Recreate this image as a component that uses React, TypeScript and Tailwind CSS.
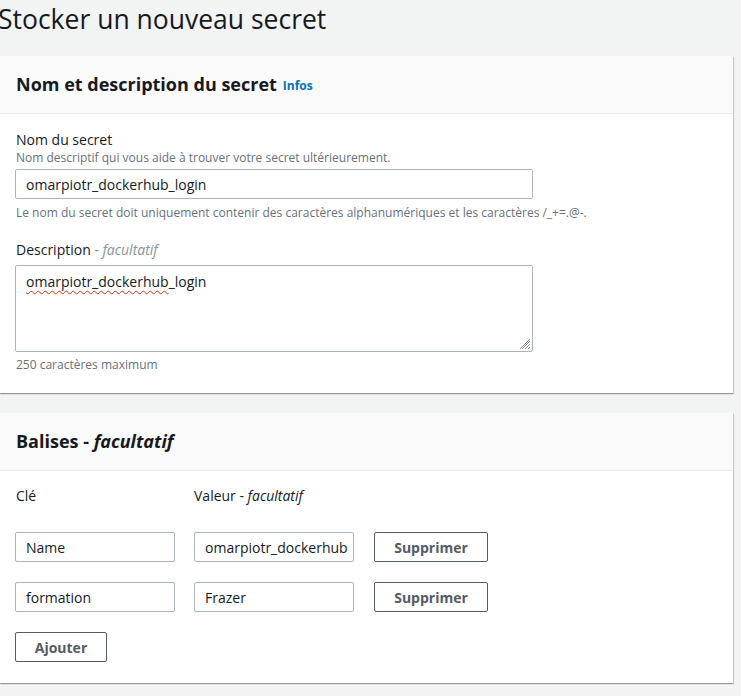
import React from "react";

const font = { fontFamily: '"Open Sans", "Noto Sans", Arial, sans-serif' };

function Input({ value, w }: { value: string; w: string }) {
  return (
    <div className={`${w} h-[30px] border border-[#aab7b8] rounded-[2px] bg-white flex items-center px-[10px] text-[14px] text-[#16191f] overflow-hidden whitespace-nowrap`}>
      {value}
    </div>
  );
}

function Btn({ label, w }: { label: string; w: string }) {
  return (
    <div className={`${w} h-[30px] border border-[#545b64] rounded-[2px] bg-white flex items-center justify-center text-[14px] font-bold text-[#545b64]`}>
      {label}
    </div>
  );
}

export default function App() {
  return (
    <div className="w-[741px] h-[696px] bg-[#f2f3f3] overflow-hidden text-[#16191f]" style={font}>
      <h1 className="text-[26.5px] leading-[36px] ml-[-2px] pt-[1px] h-[56px] text-[#16191f]">Stocker un nouveau secret</h1>

      <div className="w-[733px] bg-white shadow-[0_1px_1px_0_rgba(0,28,36,0.3),1px_1px_1px_0_rgba(0,28,36,0.15)]">
        <div className="h-[58px] bg-[#fafafa] border-b border-[#eaeded] flex items-center px-4">
          <span className="text-[18px] font-bold">Nom et description du secret</span>
          <span className="ml-[6px] text-[12px] font-bold text-[#0073bb] mt-[3px]">Infos</span>
        </div>
        <div className="px-4 pt-[16px] pb-[20px]">
          <div className="text-[14px] leading-[20px]">Nom du secret</div>
          <div className="text-[12px] leading-[16px] text-[#687078]">Nom descriptif qui vous aide à trouver votre secret ultérieurement.</div>
          <div className="mt-[3px]">
            <Input value="omarpiotr_dockerhub_login" w="w-[518px] ml-[-1px]" />
          </div>
          <div className="mt-[6px] text-[12px] leading-[16px] text-[#687078]">Le nom du secret doit uniquement contenir des caractères alphanumériques et les caractères /_+=.@-.</div>
          <div className="mt-[19px] text-[14px] leading-[20px]">
            Description <span className="italic text-[#879596]">- facultatif</span>
          </div>
          <div className="mt-[5px] ml-[-1px] w-[518px] h-[87px] border border-[#aab7b8] rounded-[2px] relative px-[10px] pt-[5px] text-[14px]">
            <span className="underline decoration-wavy decoration-[#d13212] underline-offset-[3px] decoration-[1px]">omarpiotr_dockerhub</span>_login
            <svg className="absolute right-[1px] bottom-[1px]" width="12" height="12" viewBox="0 0 12 12">
              <path d="M11 3L3 11M11 6L6 11M11 9L9 11M11 1L1 11" stroke="#8d8d8d" strokeWidth="1" fill="none" />
            </svg>
          </div>
          <div className="mt-[5px] text-[12px] leading-[16px] text-[#687078]">250 caractères maximum</div>
        </div>
      </div>

      <div className="mt-[20px] w-[733px] bg-white shadow-[0_1px_1px_0_rgba(0,28,36,0.3),1px_1px_1px_0_rgba(0,28,36,0.15)]">
        <div className="h-[58px] bg-[#fafafa] border-b border-[#eaeded] flex items-center px-4">
          <span className="text-[18px] font-bold">Balises - <span className="italic">facultatif</span></span>
        </div>
        <div className="px-4 pt-[15px] pb-[21px]">
          <div className="flex text-[14px] leading-[20px]">
            <div className="w-[178px]">Clé</div>
            <div>Valeur - <span className="italic">facultatif</span></div>
          </div>
          <div className="mt-[26px] flex flex-col gap-[20px]">
            <div className="flex items-center ml-[-1px]">
              <Input value="Name" w="w-[160px]" />
              <Input value="omarpiotr_dockerhub" w="w-[160px] ml-[19px]" />
              <Btn label="Supprimer" w="w-[114px] ml-[20px]" />
            </div>
            <div className="flex items-center ml-[-1px]">
              <Input value="formation" w="w-[160px]" />
              <Input value="Frazer" w="w-[160px] ml-[19px]" />
              <Btn label="Supprimer" w="w-[114px] ml-[20px]" />
            </div>
            <div className="flex items-center ml-[-1px]">
              <Btn label="Ajouter" w="w-[92px]" />
            </div>
          </div>
        </div>
      </div>
    </div>
  );
}
